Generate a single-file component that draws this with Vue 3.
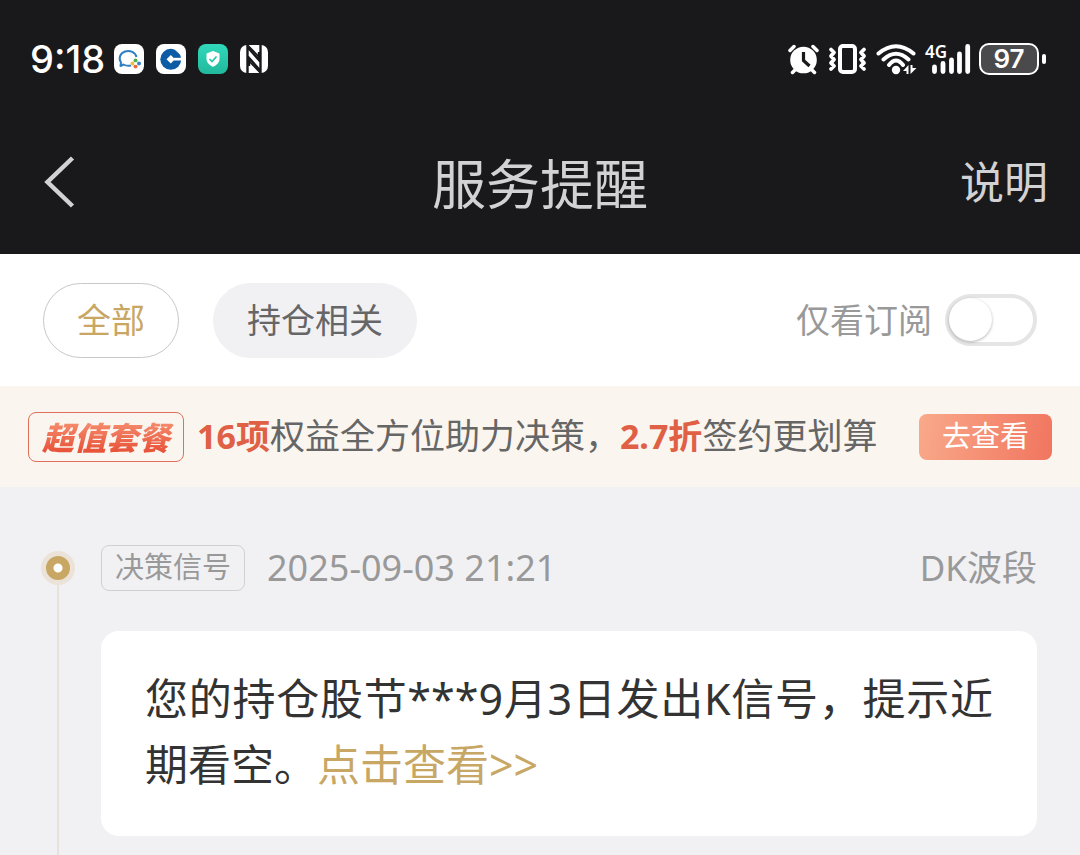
<script setup>
import { ref } from 'vue'

const filters = ['全部', '持仓相关']
const active = ref('全部')
const onlySubscribed = ref(false)
</script>

<template>
  <div class="page">
    <div class="top">
      <div class="status">
        <div class="status-left">
          <time class="clock">9:18</time>
          <svg class="app" viewBox="0 0 30 30" aria-hidden="true">
            <rect width="30" height="30" rx="8" fill="#fff" />
            <path d="M17 21.500Q13 22.500 9.500 20.500L6.500 22 7 18.500A8.500 7.500 0 1 1 22.500 13" fill="none" stroke="#2f7fc4" stroke-width="2" stroke-linejoin="round" />
            <circle cx="21.500" cy="16.500" r="2" fill="#4fae4f" />
            <circle cx="25" cy="19.500" r="2" fill="#3b86c8" />
            <circle cx="21.500" cy="22.500" r="2" fill="#e86c43" />
            <circle cx="18.500" cy="19.500" r="2" fill="#efbd38" />
            <circle cx="21.700" cy="19.500" r="1.300" fill="#fff" />
          </svg>
          <svg class="app" viewBox="0 0 30 30" aria-hidden="true">
            <rect width="30" height="30" rx="8" fill="#fff" />
            <circle cx="14.800" cy="15.300" r="10.500" fill="#0b5ba5" />
            <path d="M14.800 11 19 15.300 14.800 19.500 10.500 15.300Z" fill="#fff" />
            <path d="M18 13.800H27V16.500H18Z" fill="#fff" />
            <path d="M17.500 4 25.500 11.500" stroke="#fff" stroke-width="1" />
          </svg>
          <svg class="app" viewBox="0 0 30 30" aria-hidden="true">
            <defs>
              <linearGradient id="guard" x1="0" y1="0" x2="0" y2="1">
                <stop offset="0" stop-color="#31d8bb" />
                <stop offset="1" stop-color="#21b99c" />
              </linearGradient>
            </defs>
            <rect width="30" height="30" rx="8" fill="url(#guard)" />
            <path d="M15 7 21.500 9.500V15C21.500 18.500 18.500 21.300 15 22.800 11.500 21.300 8.500 18.500 8.500 15V9.500Z" fill="#fff" />
            <path d="M11.500 15 14 17.500 18.500 12.500" fill="none" stroke="#25c5a7" stroke-width="1.600" />
          </svg>
          <svg class="nfc" viewBox="0 0 28 30" aria-hidden="true">
            <rect y="1" width="28" height="28" rx="7" fill="#fff" />
            <path d="M7.500 29V3L19 16V8M20.500 1V27L9 14V22" fill="none" stroke="#19191b" stroke-width="2.400" />
            <path d="M7.500 1 20.500 14.500M7.500 15.500 20.500 29" stroke="#19191b" stroke-width="1.800" />
          </svg>
        </div>
        <div class="status-right">
          <svg width="32" height="32" viewBox="0 0 32 32" aria-hidden="true">
            <circle cx="15.500" cy="17" r="13.300" fill="#fff" />
            <path d="M2 7.500 6 3.500M25 3.500 29 7.500M4.500 29.500 8 26M26.500 29.500 23 26" stroke="#fff" stroke-width="3.500" stroke-linecap="round" />
            <path d="M15.500 9V17.500L21.500 23" fill="none" stroke="#19191b" stroke-width="3.200" />
          </svg>
          <svg width="40" height="32" viewBox="0 0 40 32" aria-hidden="true">
            <rect x="12" y="3" width="15" height="26" rx="3" fill="none" stroke="#fff" stroke-width="4" />
            <path d="M3 6.500 6 9.500 3 13 6 16.500 3 20 6 23 3 26M36 6.500 33 9.500 36 13 33 16.500 36 20 33 23 36 26" fill="none" stroke="#fff" stroke-width="3.800" stroke-linejoin="round" stroke-linecap="round" />
          </svg>
          <svg width="41" height="32" viewBox="0 0 41 32" aria-hidden="true">
            <path d="M2.500 10.500Q20 -4 37.500 10.500M7.500 16.500Q20 5 32.500 16.500M13 22Q20 13 27 22" fill="none" stroke="#fff" stroke-width="4" stroke-linecap="round" />
            <circle cx="20" cy="27" r="4.200" fill="#fff" />
            <path d="M27 28 32.500 22V31H30.500V28ZM34.500 22H36.500V25H40.500L34.500 31Z" fill="#fff" />
          </svg>
          <svg class="signal" width="46" height="32" viewBox="0 0 46 32" role="img" aria-label="4G">
            <text x="0" y="15" class="net">4G</text>
            <path d="M9.500 24V28.500M18 20.500V28.500M26.500 17V28.500M34.500 11V28.500M42.700 3.500V28.500" stroke="#fff" stroke-width="4.800" stroke-linecap="round" />
          </svg>
          <div class="battery"><span class="level">97</span></div>
        </div>
      </div>
      <header class="nav">
        <button class="back" type="button" aria-label="返回">
          <svg width="32" height="52" viewBox="0 0 32 52" aria-hidden="true">
            <path d="M28.500 2 3.500 26 28.500 50" fill="none" stroke="#d2d2d4" stroke-width="4.500" />
          </svg>
        </button>
        <h1>服务提醒</h1>
        <a class="explain" href="#">说明</a>
      </header>
    </div>

    <div class="filters">
      <button
        v-for="name in filters"
        :key="name"
        type="button"
        class="chip"
        :class="{ on: active === name }"
        @click="active = name"
      >{{ name }}</button>
      <label class="only" for="only">仅看订阅</label>
      <input id="only" v-model="onlySubscribed" class="switch" type="checkbox" />
    </div>

    <div class="banner">
      <div class="deal"><span>超值套餐</span></div>
      <p><b>16项</b>权益全方位助力决策，<b>2.7折</b>签约更划算</p>
      <button type="button" class="go">去查看</button>
    </div>

    <main class="feed">
      <div class="rail"><i class="dot"></i></div>
      <article>
        <div class="meta">
          <span class="tag">决策信号</span>
          <time>2025-09-03 21:21</time>
          <span class="source">DK波段</span>
        </div>
        <p class="card">您的持仓股节***9月3日发出K信号，提示近期看空。<a href="#">点击查看&gt;&gt;</a></p>
      </article>
    </main>
  </div>
</template>

<style>
body {
  background: #f1f1f4;
}
</style>

<style scoped>
.page {
  min-height: 100vh;
  display: flex;
  flex-direction: column;
  background: #f1f1f4;
  font-family: "Noto Sans", "Noto Sans CJK SC", sans-serif;
}
* {
  box-sizing: border-box;
}
button {
  font-family: inherit;
  padding: 0;
  border: 0;
  background: none;
  cursor: pointer;
}
a {
  text-decoration: none;
}
svg {
  display: block;
}
.top {
  background: #19191b;
  color: #d2d2d4;
}
.status {
  height: 118px;
  padding: 0 34px 0 30px;
  display: flex;
  align-items: center;
  justify-content: space-between;
  color: #fff;
}
.status-left {
  display: flex;
  align-items: center;
  gap: 12px;
}
.clock {
  width: 72px;
  font: 500 38px/48px Inter, "Noto Sans", sans-serif;
  white-space: nowrap;
}
.app {
  width: 30px;
  height: 30px;
}
.nfc {
  width: 28px;
  height: 30px;
}
.status-right {
  display: flex;
  align-items: center;
  gap: 8px;
}
.signal {
  overflow: visible;
}
.net {
  font: 600 17px "Noto Sans", sans-serif;
  fill: #fff;
}
.battery {
  position: relative;
  width: 60px;
  height: 32px;
  margin-right: 7px;
  border: 2px solid #fff;
  border-radius: 10px;
  background: #4a4a4c;
  display: flex;
  align-items: center;
  justify-content: center;
}
.battery::after {
  content: "";
  position: absolute;
  right: -9px;
  top: 9px;
  width: 4px;
  height: 10px;
  border-radius: 2px;
  background: #fff;
}
.level {
  font: 600 26px/28px Inter, "Noto Sans", sans-serif;
}
.nav {
  height: 136px;
  padding: 0 32px 8px 44px;
  display: grid;
  grid-template-columns: 1fr auto 1fr;
  align-items: center;
}
.back {
  width: 32px;
}
h1 {
  margin: 0;
  padding: 3px 12px 0 0;
  font-size: 54px;
  line-height: 72px;
  font-weight: 400;
}
.explain {
  justify-self: end;
  color: inherit;
  font-size: 44px;
  line-height: 60px;
}
.filters {
  height: 132px;
  padding: 0 43px;
  display: flex;
  align-items: center;
  background: #fff;
}
.chip {
  height: 75px;
  margin-right: 34px;
  padding: 0 33px 4px;
  border: 1px solid #f1f1f4;
  border-radius: 38px;
  background: #f1f1f4;
  color: #666;
  font-size: 34px;
}
.chip.on {
  border-color: #c8c8ca;
  background: #fff;
  color: #c8a765;
}
.only {
  margin-left: auto;
  padding-bottom: 4px;
  color: #999;
  font-size: 34px;
}
.switch {
  appearance: none;
  width: 92px;
  height: 52px;
  margin: 0 0 0 13px;
  border: 4px solid #e5e5e5;
  border-radius: 26px;
  background: #fff;
  cursor: pointer;
}
.switch::before {
  content: "";
  display: block;
  width: 43px;
  height: 43px;
  border-radius: 50%;
  background: #fff;
  box-shadow: 0 1px 3px rgba(0, 0, 0, 0.3);
}
.switch:checked {
  background: #c8a765;
  border-color: #c8a765;
}
.switch:checked::before {
  margin-left: auto;
}
.banner {
  height: 101px;
  padding: 0 28px;
  display: flex;
  align-items: center;
  background: #faf5ee;
}
.deal {
  width: 156px;
  height: 50px;
  border: 1px solid #e0705c;
  border-radius: 8px;
  display: flex;
  align-items: center;
  justify-content: center;
}
.deal span {
  padding: 2px 4px 0;
  font-size: 32px;
  line-height: 44px;
  font-weight: 900;
  font-style: italic;
  color: transparent;
  background: linear-gradient(#f58a6c 20%, #e8543a 80%);
  background-clip: text;
}
.banner p {
  margin: 0;
  padding: 0 0 2px 13px;
  color: #666;
  font-size: 35px;
  line-height: 50px;
  white-space: nowrap;
}
.banner b {
  color: #e06045;
  font-size: 34px;
}
.go {
  width: 133px;
  height: 46px;
  margin-left: auto;
  padding-bottom: 2px;
  border-radius: 8px;
  background: linear-gradient(100deg, #f9a98a, #f1755f);
  color: #fff;
  font-size: 29px;
  line-height: 44px;
}
.feed {
  flex: 1;
  padding: 58px 43px 0 41px;
  display: flex;
}
.rail {
  width: 60px;
  padding-top: 6px;
  background: linear-gradient(#e9e1dc, #e9e1dc) 16px 30px / 2px 100% no-repeat;
}
.dot {
  display: block;
  width: 34px;
  height: 34px;
  border: 5px solid #ebe3d8;
  border-radius: 50%;
  background: radial-gradient(circle, #fff 4px, #c8a765 5px);
}
article {
  flex: 1;
}
.meta {
  height: 46px;
  margin-bottom: 40px;
  display: flex;
  align-items: center;
  color: #999;
  font-size: 35px;
  line-height: 46px;
}
.tag {
  height: 46px;
  padding: 0 13px;
  border: 1px solid #d0d0d2;
  border-radius: 8px;
  font-size: 29px;
  line-height: 42px;
}
.meta time {
  margin-left: 22px;
  font-size: 36px;
}
.source {
  margin-left: auto;
}
.card {
  margin: 0;
  padding: 35px 44px 38px;
  border-radius: 18px;
  background: #fff;
  color: #333;
  font-size: 43px;
  line-height: 66px;
  text-align: justify;
}
.card a {
  color: #c8a765;
}
</style>
